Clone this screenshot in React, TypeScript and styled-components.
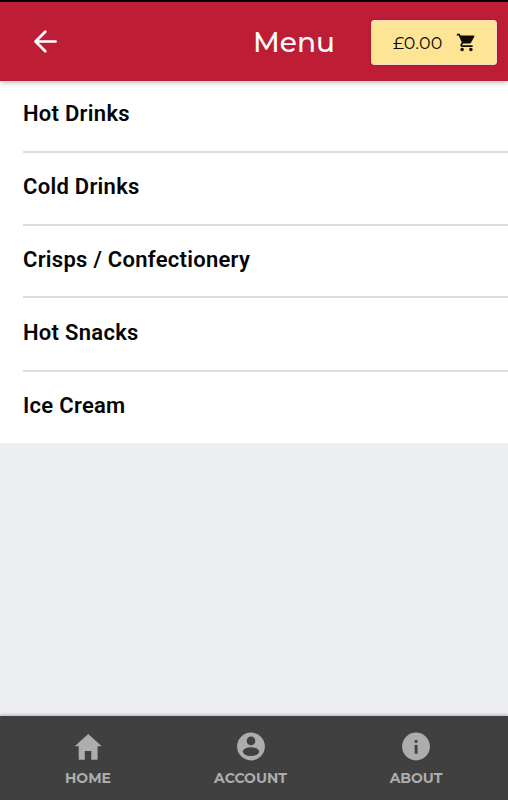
import React from "react";
import styled, { createGlobalStyle } from "styled-components";
import { MdShoppingCart } from "react-icons/md";

const GlobalStyle = createGlobalStyle`
  * { box-sizing: border-box; }
  body { margin: 0; }
`;

const Screen = styled.div`
  width: 508px;
  height: 800px;
  display: flex;
  flex-direction: column;
  background: #edeef2;
  overflow: hidden;
`;

const Header = styled.header`
  height: 81px;
  flex: none;
  display: flex;
  align-items: center;
  padding: 3px 11px 0 33px;
  background: #be1e35;
  border-top: 2px solid #080002;
  box-shadow: 0 1px 6px rgba(0, 0, 0, 0.32);
  z-index: 1;
`;

const BackButton = styled.button`
  display: flex;
  padding: 0;
  border: 0;
  background: none;
  color: #fff;
  margin-top: -4px;
`;

const Title = styled.h1`
  flex: 1;
  margin: -2px 36px 0 0;
  text-align: right;
  font: 500 28px/32px Montserrat, Inter, sans-serif;
  color: #fff;
`;

const Basket = styled.button`
  width: 126px;
  height: 45px;
  flex: none;
  display: flex;
  align-items: center;
  gap: 13px;
  margin-top: -1px;
  padding: 0 0 0 21px;
  background: #fee596;
  border: 1px solid #f6dcc0;
  border-radius: 3px;
  box-shadow: 0 0 2px rgba(80, 0, 10, 0.5);
  font: 400 17.5px/22px Montserrat, Inter, sans-serif;
  letter-spacing: 0.2px;
  color: #100c08;
`;

const Categories = styled.ul`
  margin: 0;
  padding: 0 0 0 23px;
  list-style: none;
  background: #fff;
  height: 362px;
  flex: none;
`;

const Category = styled.li<{ $height: number; $top: number }>`
  height: ${(p) => p.$height}px;
  padding-top: ${(p) => p.$top}px;
  border-bottom: 2px solid #dcdcdc;
  font: 600 22px/28px Roboto, sans-serif;
  letter-spacing: 0.28px;
  color: #050505;
  &:last-child { border-bottom: 0; }
`;

const TabBar = styled.nav`
  height: 84px;
  margin-top: auto;
  flex: none;
  display: grid;
  grid-template-columns: 176px 149px 182px;
  background: #404040;
  box-shadow: 0 -1px 3px rgba(0, 0, 0, 0.25);
`;

const Tab = styled.a`
  display: flex;
  flex-direction: column;
  align-items: center;
  padding-top: 14px;
  color: #adadad;
  svg { display: block; flex: none; }
`;

const TabLabel = styled.span`
  margin-top: 5px;
  font: 700 14px/18px Montserrat, Inter, sans-serif;
`;

const HomeIcon = ({ size }: { size: number }) => (
  <svg width={size} height={size} viewBox="0 0 34 34">
    <path d="M17.2 4 30.7 16.2H26.6V29.8H20.3V21H13.8V29.8H7.7V16.2H3.7Z" fill="currentColor" />
  </svg>
);

const AccountIcon = ({ size }: { size: number }) => (
  <svg width={size} height={size} viewBox="0 0 34 34">
    <circle cx="17" cy="16.5" r="13.9" fill="currentColor" />
    <circle cx="17" cy="10.9" r="4.3" fill="#404040" />
    <ellipse cx="17" cy="21.6" rx="8.2" ry="4.3" fill="#404040" />
  </svg>
);

const InfoIcon = ({ size }: { size: number }) => (
  <svg width={size} height={size} viewBox="0 0 34 34">
    <circle cx="17" cy="16.5" r="13.9" fill="currentColor" />
    <path d="M15.7 10h2.8v2.8h-2.8zM15.7 15h2.8v8.8h-2.8z" fill="#404040" />
  </svg>
);

const categories = [
  { name: "Hot Drinks", height: 72, top: 19 },
  { name: "Cold Drinks", height: 73, top: 20 },
  { name: "Crisps / Confectionery", height: 72, top: 20 },
  { name: "Hot Snacks", height: 74, top: 21 },
  { name: "Ice Cream", height: 71, top: 20 },
];

const tabs = [
  { label: "HOME", icon: HomeIcon },
  { label: "ACCOUNT", icon: AccountIcon },
  { label: "ABOUT", icon: InfoIcon },
];

export default function App() {
  return (
    <>
      <GlobalStyle />
      <Screen>
        <Header>
          <BackButton aria-label="Back">
            <svg width="25" height="25" viewBox="0 0 25 25" fill="none" stroke="currentColor" strokeWidth="2.7" strokeLinecap="round" strokeLinejoin="round">
              <path d="M12.3 2.7 2.5 12.5l9.8 9.8M3 12.5h19.6" />
            </svg>
          </BackButton>
          <Title>Menu</Title>
          <Basket>
            £0.00
            <MdShoppingCart size={21} />
          </Basket>
        </Header>
        <Categories>
          {categories.map((c) => (
            <Category key={c.name} $height={c.height} $top={c.top}>{c.name}</Category>
          ))}
        </Categories>
        <TabBar>
          {tabs.map(({ label, icon: Icon }) => (
            <Tab key={label}>
              <Icon size={34} />
              <TabLabel>{label}</TabLabel>
            </Tab>
          ))}
        </TabBar>
      </Screen>
    </>
  );
}
